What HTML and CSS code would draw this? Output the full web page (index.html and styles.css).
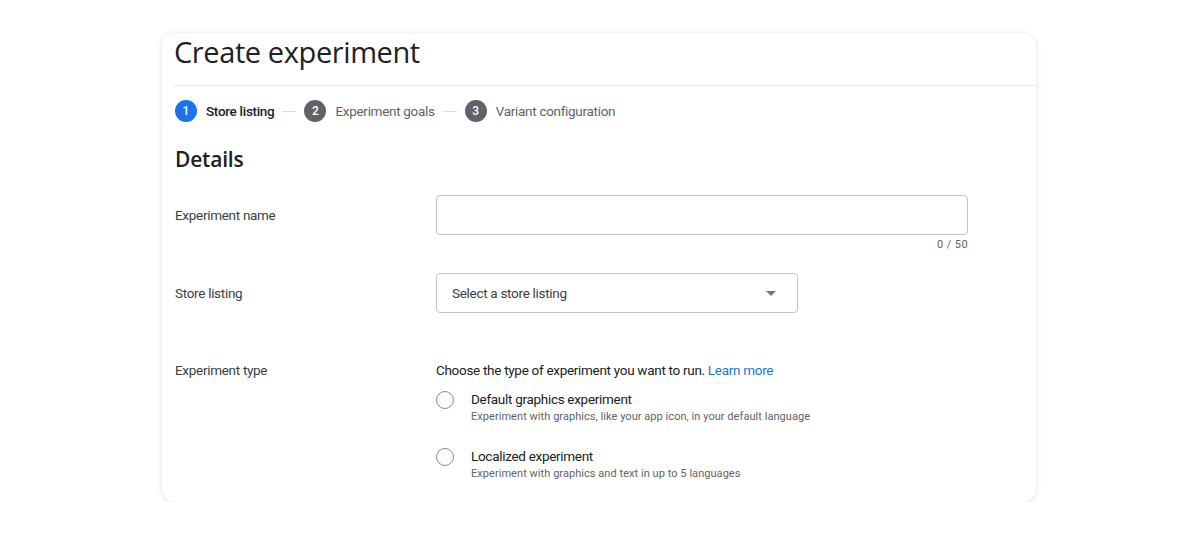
FILE: index.html
```html
<!DOCTYPE html>
<html lang="en">
<head>
  <meta charset="UTF-8" />
  <meta name="viewport" content="width=device-width, initial-scale=1.0" />
  <title>Create experiment</title>
  <link rel="stylesheet" href="styles.css">
</head>
<body>
  <div class="card">
    <div class="header">
      <h1>Create experiment</h1>
    </div>

    <div class="stepper">
      <div class="step active"><span class="num">1</span><span class="label">Store listing</span></div>
      <span class="line"></span>
      <div class="step"><span class="num">2</span><span class="label">Experiment goals</span></div>
      <span class="line"></span>
      <div class="step"><span class="num">3</span><span class="label">Variant configuration</span></div>
    </div>

    <h2>Details</h2>

    <div class="row row-name">
      <label class="row-label" for="name">Experiment name</label>
      <div class="field field-wide">
        <input type="text" id="name" class="text-input" />
        <div class="counter">0 / 50</div>
      </div>
    </div>

    <div class="row row-listing">
      <label class="row-label">Store listing</label>
      <div class="field">
        <div class="select">
          <span>Select a store listing</span>
          <svg width="10" height="5" viewBox="0 0 10 5"><path d="M0 0 L10 0 L5 5 Z" fill="#757575"/></svg>
        </div>
      </div>
    </div>

    <div class="row row-type">
      <div class="row-label">Experiment type</div>
      <div class="field">
        <p class="intro">Choose the type of experiment you want to run. <a href="#">Learn more</a></p>
        <div class="option">
          <span class="radio"></span>
          <div>
            <div class="opt-title">Default graphics experiment</div>
            <div class="opt-sub">Experiment with graphics, like your app icon, in your default language</div>
          </div>
        </div>
        <div class="option">
          <span class="radio"></span>
          <div>
            <div class="opt-title">Localized experiment</div>
            <div class="opt-sub">Experiment with graphics and text in up to 5 languages</div>
          </div>
        </div>
      </div>
    </div>
  </div>
</body>
</html>
```

FILE: styles.css
```css
body { margin: 0; background: #fff; font-family: Roboto, Arial, sans-serif; color: #3c4043; }

.card { width: 874px; height: 469px; box-sizing: border-box; margin: 33px 0 0 162px; background: #fff; border-radius: 14px; box-shadow: 0 1px 6px rgba(0,0,0,0.12); padding-left: 12px; }

.header { border-bottom: 1px solid #e6e6e6; padding-bottom: 14px; }
.header h1 { margin: 0; font-family: "Open Sans", sans-serif; font-weight: 500; font-size: 29px; line-height: 38px; color: #202124; letter-spacing: -0.4px; }

.stepper { display: flex; align-items: center; height: 24px; margin-top: 13px; padding-left: 1px; }
.step { display: flex; align-items: center; gap: 9px; font-size: 13.5px; letter-spacing: -0.3px; color: #5f6368; }
.step .num { width: 22px; height: 22px; border-radius: 50%; background: #5f6368; color: #fff; font-size: 12px; font-weight: 500; letter-spacing: 0; display: flex; align-items: center; justify-content: center; }
.step.active .num { background: #1a73e8; }
.step.active .label { color: #202124; font-weight: 500; }
.line { width: 14px; height: 1px; background: #dadce0; margin: 0 8px; }

h2 { margin: 20px 0 0; font-family: "Open Sans", sans-serif; font-weight: 600; font-size: 21px; line-height: 32px; color: #202124; padding-left: 1px; letter-spacing: -0.2px; }

.row { display: grid; grid-template-columns: 261px 1fr; padding-left: 1px; font-size: 13.5px; letter-spacing: -0.3px; }
.row-label { color: #3c4043; }

.row-name { margin-top: 20px; }
.row-name .row-label, .row-listing .row-label { line-height: 40px; }
.field-wide { width: 532px; }
.text-input { display: block; box-sizing: border-box; width: 532px; height: 40px; margin: 0; border: 1px solid #c4c4c4; border-radius: 4px; font: inherit; }
.counter { text-align: right; font-size: 11px; color: #5f6368; line-height: 16px; margin-top: 2px; letter-spacing: 0.4px; }

.row-listing { margin-top: 20px; }
.select { box-sizing: border-box; width: 362px; height: 40px; border: 1px solid #c4c4c4; border-radius: 4px; display: flex; align-items: center; justify-content: space-between; padding: 0 21px 0 15px; color: #3c4043; }

.row-type { margin-top: 47px; }
.row-type .row-label { line-height: 20px; }
.intro { margin: 0; line-height: 20px; color: #202124; }
.intro a { color: #1a73e8; text-decoration: none; }

.option { display: flex; align-items: flex-start; gap: 17px; margin-top: 10px; }
.option + .option { margin-top: 22px; }
.radio { width: 16px; height: 16px; border: 1px solid #8a8a8a; border-radius: 50%; margin-top: 1px; flex-shrink: 0; }
.opt-title { font-size: 13.5px; line-height: 18px; color: #202124; }
.opt-sub { font-size: 11px; line-height: 16px; margin-top: 1px; color: #5f6368; letter-spacing: 0.05px; }
```
